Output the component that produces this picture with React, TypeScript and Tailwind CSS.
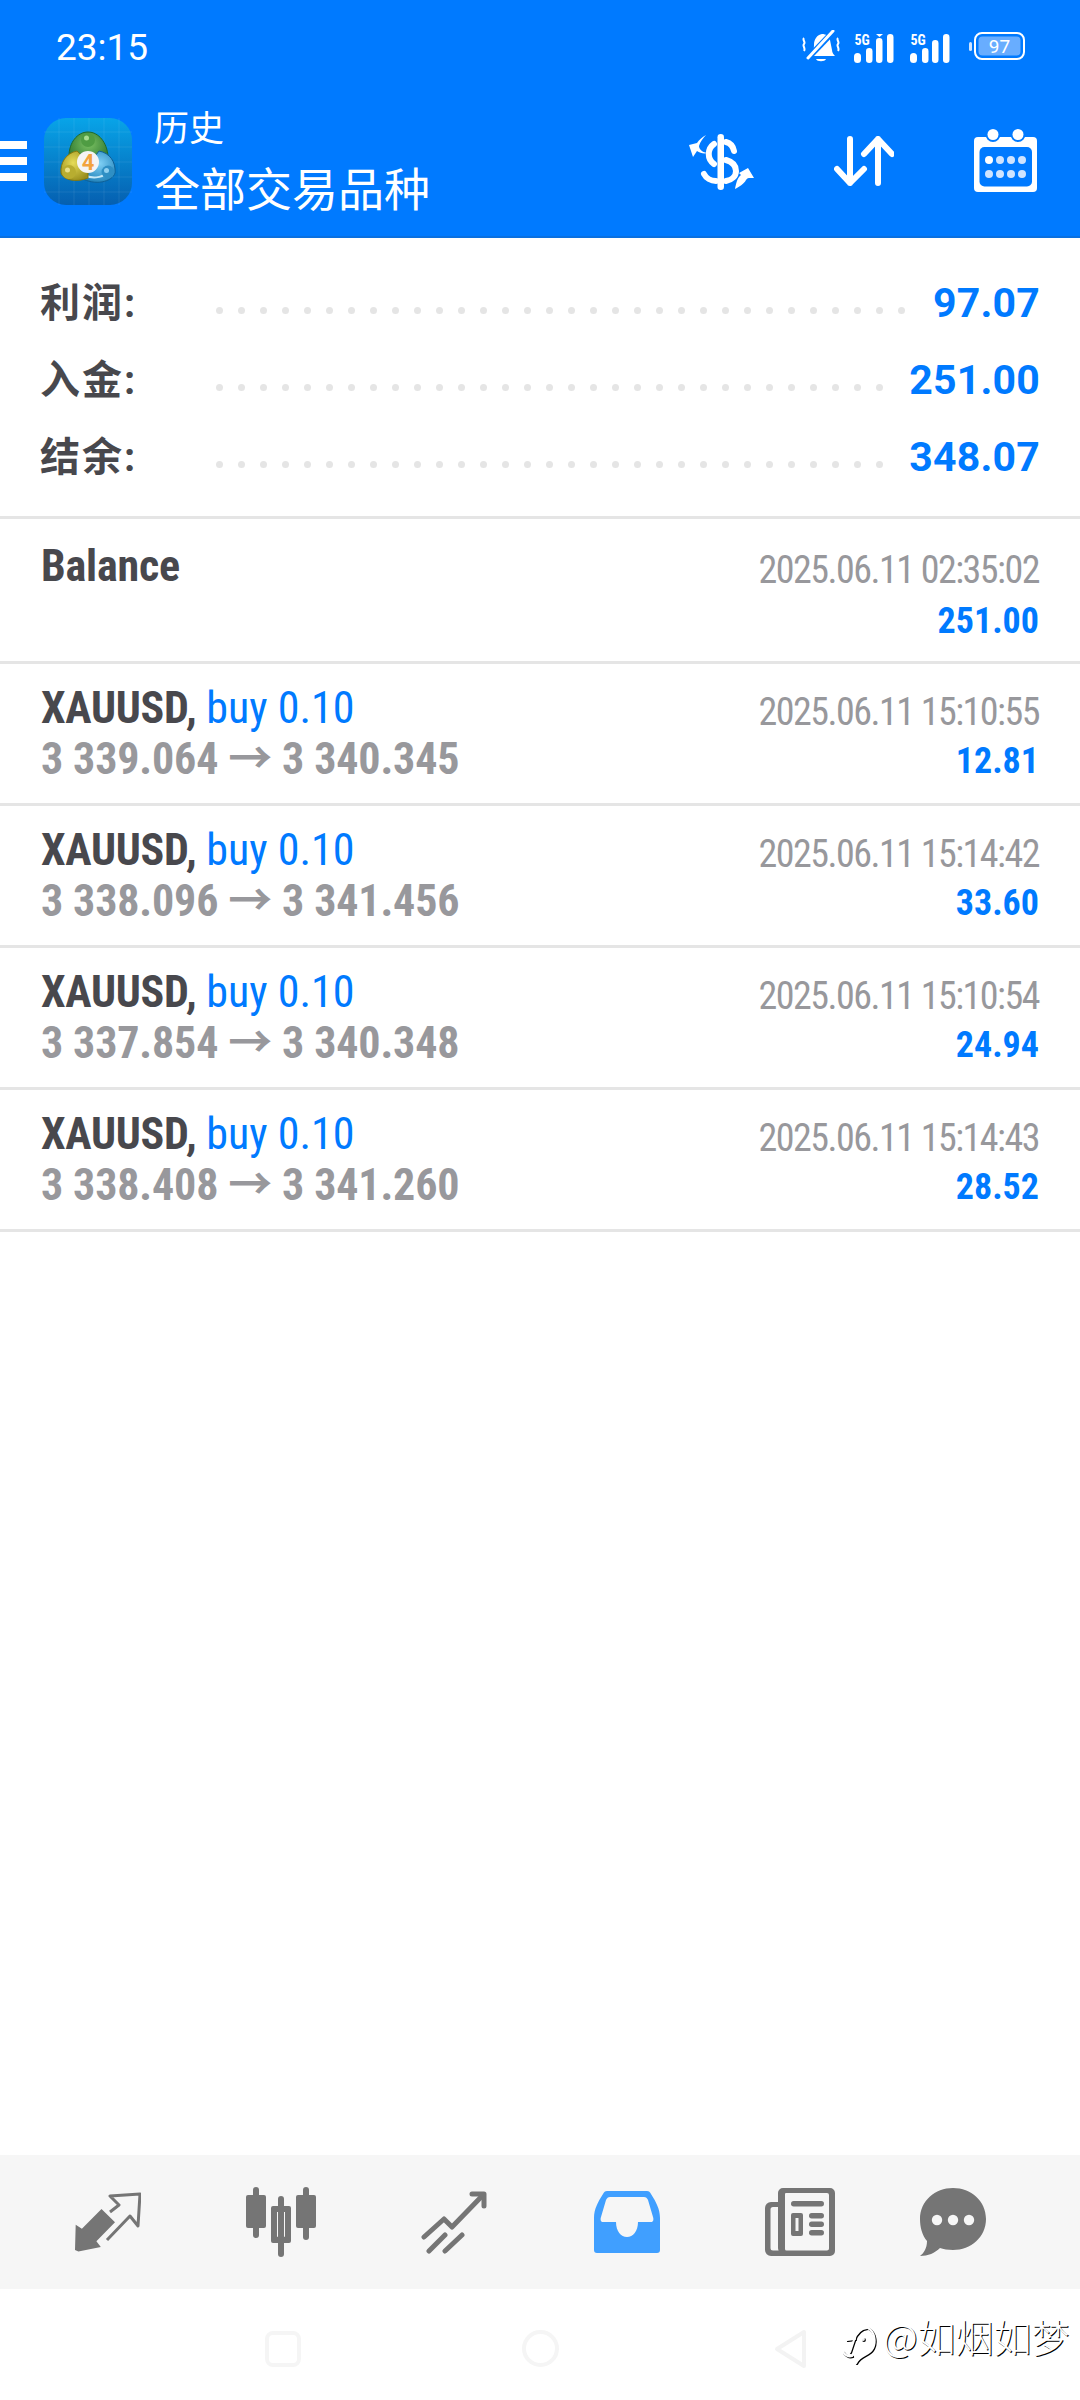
const CJK = "Roboto, 'Noto Sans CJK SC', sans-serif";

const summary = [
  { label: "利润:", value: "97.07", dots: 32 },
  { label: "入金:", value: "251.00", dots: 31 },
  { label: "结余:", value: "348.07", dots: 31 },
];

const deals = [
  { from: "3 339.064", to: "3 340.345", time: "2025.06.11 15:10:55", profit: "12.81" },
  { from: "3 338.096", to: "3 341.456", time: "2025.06.11 15:14:42", profit: "33.60" },
  { from: "3 337.854", to: "3 340.348", time: "2025.06.11 15:10:54", profit: "24.94" },
  { from: "3 338.408", to: "3 341.260", time: "2025.06.11 15:14:43", profit: "28.52" },
];

function Signal({ marker }: { marker?: boolean }) {
  return (
    <svg width="40" height="33" viewBox="0 -4 40 33" fill="#fff">
      <text x="0.5" y="10.5" fontSize="14" fontWeight="700" fontFamily="Roboto, sans-serif" className="[font-stretch:75%]">5G</text>
      <rect x="0" y="19" width="7" height="10" rx="3.500" />
      <rect x="12" y="14" width="6.500" height="15" rx="3.200" />
      <rect x="22" y={marker ? 4 : 6} width="6.500" height={marker ? 25 : 23} rx="3.200" />
      <rect x="33" y="0" width="6.500" height="29" rx="3.200" />
      {marker && <path d="M22 0h7l-3.500 3z" />}
    </svg>
  );
}

function Battery() {
  return (
    <svg width="56" height="28" viewBox="0 0 56 28">
      <rect x="0" y="10" width="3" height="9" rx="1.500" fill="#cfe4ff" />
      <rect x="6" y="1" width="49" height="26" rx="7" fill="none" stroke="#fff" strokeWidth="2" />
      <rect x="9.500" y="4.500" width="42" height="19" rx="4" fill="#68adff" />
      <text x="30.500" y="20.500" textAnchor="middle" fontSize="19" fill="#fff" fontFamily="Roboto, sans-serif">97</text>
    </svg>
  );
}

function MuteBell() {
  return (
    <svg width="38" height="33" viewBox="0 0 38 33" fill="none" stroke="#fff">
      <path d="M9 26c2-3 3-6 3-11 0-6 3-10 8-11 4 0 7 2 8 6l2 10c0 3 2 5 3 6z" fill="#fff" stroke="none" />
      <path d="M14 29h10c-1 3-9 3-10 0z" fill="#fff" stroke="none" />
      <path d="M6 28L31 2" stroke="#007aff" strokeWidth="6" />
      <path d="M6 28L31 1" strokeWidth="3" strokeLinecap="round" />
      <path d="M2 8c-2 2 2 4 0 6s2 4 0 7M36 8c-2 2 2 4 0 6s2 4 0 7" strokeWidth="2" />
    </svg>
  );
}

function DollarSwap() {
  return (
    <svg width="66" height="56" viewBox="0 0 66 56" fill="#fff">
      <g fill="none" stroke="#fff" strokeWidth="6" strokeLinecap="round">
        <path d="M26 10C19 15 19 25 26 30" />
        <path d="M38 8c4 1 7 4 8 9" />
        <path d="M38 26c7 2 10 6 10 11 0 5-4 9-10 10" />
        <path d="M16 40c2 4 7 7 12 7" />
      </g>
      <rect x="29.500" y="0" width="6.500" height="56" rx="3.200" />
      <path d="M18 1C14 3 11 6 9 9L1 11l4 12 4-6c3 2 7 3 10 2-5-1-8-4-8-7 1-4 4-8 7-11z" />
      <path d="M47 55c1-5 2-11 6-14l-2-2 9-5 6 10h-5c-2 0-2 1-3 2-2 4-7 7-11 9z" />
    </svg>
  );
}

function SortArrows() {
  return (
    <svg width="60" height="50" viewBox="0 0 60 50" fill="none" stroke="#fff" strokeWidth="6" strokeLinecap="round" strokeLinejoin="round">
      <path d="M16 3v44M3 33l13 14 14-14" />
      <path d="M44 47V3M30 18L44 3l14 15" />
    </svg>
  );
}

function Calendar() {
  return (
    <svg width="64" height="64" viewBox="0 0 64 64" fill="#fff">
      <rect x="0" y="8" width="63" height="55" rx="4" />
      <rect x="5.500" y="18" width="52.500" height="39.500" rx="5" fill="#007aff" />
      <circle cx="19" cy="5.500" r="7.500" fill="#007aff" />
      <circle cx="44" cy="5.500" r="7.500" fill="#007aff" />
      <circle cx="19" cy="5.500" r="5.500" />
      <circle cx="44" cy="5.500" r="5.500" />
      {[15, 26, 37, 48].map((x, i) => (
        <g key={x}>
          <circle cx={x} cy="31" r="4" fill={i === 0 ? "#fff" : "#cfe4ff"} />
          <circle cx={x} cy="45" r="4" fill="#cfe4ff" />
        </g>
      ))}
    </svg>
  );
}

function AppLogo() {
  return (
    <svg width="88" height="87" viewBox="0 0 88 87">
      <defs>
        <linearGradient id="tile" x1="0" y1="0" x2="0" y2="1">
          <stop offset="0" stopColor="#08a4e8" />
          <stop offset="1" stopColor="#055fb0" />
        </linearGradient>
        <radialGradient id="green" cx="0.5" cy="0.35" r="0.65">
          <stop offset="0" stopColor="#7cc263" />
          <stop offset="1" stopColor="#25702c" />
        </radialGradient>
        <radialGradient id="yellow" cx="0.45" cy="0.4" r="0.65">
          <stop offset="0" stopColor="#e6dc58" />
          <stop offset="1" stopColor="#9a8f1c" />
        </radialGradient>
        <radialGradient id="sky" cx="0.55" cy="0.4" r="0.65">
          <stop offset="0" stopColor="#7fd0f5" />
          <stop offset="1" stopColor="#1c7fb8" />
        </radialGradient>
      </defs>
      <rect width="88" height="87" rx="22" fill="url(#tile)" />
      <path d="M15 0v87M30 0v87M45 0v87M60 0v87M75 0v87M0 14h88M0 29h88M0 44h88M0 59h88M0 74h88" stroke="#fff" strokeOpacity="0.08" strokeWidth="1" />
      <path d="M44 14c11 0 19 11 20 24L44 48 25 38c0-13 8-24 19-24z" fill="url(#green)" stroke="#1f6a2a" strokeWidth="1" />
      <circle cx="44" cy="22" r="7" fill="#4f9c43" />
      <circle cx="42.500" cy="20" r="2.500" fill="#a8dc90" />
      <path d="M55 33c11 2 17 11 16 22-3 9-20 13-34 5l9-15z" fill="url(#sky)" stroke="#0f5f95" strokeWidth="1" />
      <path d="M40 57c8 4 17 3 23-2" fill="none" stroke="#c4e8f8" strokeWidth="2" />
      <circle cx="64" cy="54" r="6.500" fill="#2f8fc4" />
      <circle cx="62.500" cy="52.500" r="2.500" fill="#8fd0f0" />
      <path d="M33 33c-11 2-17 12-16 22 2 7 15 10 27 5L44 44z" fill="url(#yellow)" stroke="#85790f" strokeWidth="1" />
      <circle cx="25" cy="54" r="7" fill="#b8ad30" />
      <circle cx="23.500" cy="52" r="2.500" fill="#e8e08a" />
      <circle cx="44" cy="44" r="11" fill="#f4f4f4" />
      <text x="44" y="52" textAnchor="middle" fontSize="22" fontWeight="700" fill="#f2a33c" fontFamily="Roboto, sans-serif">4</text>
    </svg>
  );
}

function TradeIcon() {
  return (
    <svg width="66" height="60" viewBox="0 0 66 60" fill="#757575">
      <path d="M26.500 17L40 30.300 21.400 49.200 25.800 55 3.400 59.500 0 58 .7 32.700 6.900 36.800z" />
      <path d="M35 20l9-7-9-9 30-2-2 32-8-10-23 24" fill="none" stroke="#757575" strokeWidth="3" strokeLinejoin="round" />
    </svg>
  );
}

function CandlesIcon() {
  return (
    <svg width="70" height="70" viewBox="0 0 70 70" fill="#757575">
      <rect x="7" y="0" width="6" height="51" rx="3" />
      <rect x="0" y="8" width="20" height="33" rx="2" />
      <rect x="32" y="9" width="6" height="61" rx="3" />
      <path fillRule="evenodd" d="M27 19h16a2 2 0 012 2v33a2 2 0 01-2 2H27a2 2 0 01-2-2V21a2 2 0 012-2zm4 6v24a1 1 0 001 1h6a1 1 0 001-1V25z" />
      <rect x="57" y="0" width="6" height="53" rx="3" />
      <rect x="50" y="8" width="20" height="33" rx="2" />
    </svg>
  );
}

function ChartIcon() {
  return (
    <svg width="66" height="63" viewBox="0 0 66 63" fill="none" stroke="#757575" strokeWidth="5" strokeLinecap="round" strokeLinejoin="round">
      <path d="M3 46l20-18 8 8 31-32" />
      <path d="M51 3h12v12" />
      <path d="M8 60l16-16M24 60l17-16" />
    </svg>
  );
}

function InboxIcon() {
  return (
    <svg width="66" height="63" viewBox="0 0 66 63" fill="#409fff">
      <path fillRule="evenodd" d="M13 0h40c2 0 3 1 4 3 5 8 9 15 9 24v32c0 2-1 3-3 3H3c-2 0-3-1-3-3V27C0 18 4 11 9 3c1-2 2-3 4-3zm3 6c-2 0-3 1-4 3L7 26c-1 3 0 5 2 5h13c0 9 5 15 11 15s11-6 11-15h13c2 0 3-2 2-5L54 9c-1-2-2-3-4-3z" />
    </svg>
  );
}

function NewsIcon() {
  return (
    <svg width="70" height="68" viewBox="0 0 70 68" fill="#757575">
      <path fillRule="evenodd" d="M19 0h46a5 5 0 015 5v58a5 5 0 01-5 5H6a6 6 0 01-6-6V20a6 6 0 016-6h7V5a5 5 0 015-5zm1 6v55a1.500 1.500 0 001.500 1.500H62a2 2 0 002-2V7a2 2 0 00-2-2H21a1 1 0 00-1 1zM13 19H8a2.500 2.500 0 00-2.500 2.500V60a2.500 2.500 0 002.500 2.500h5.600A6 6 0 0113 60z" />
      <rect x="26" y="13" width="33" height="5.500" rx="2.700" />
      <path fillRule="evenodd" d="M28 25h8a2 2 0 012 2v19a2 2 0 01-2 2h-8a2 2 0 01-2-2V27a2 2 0 012-2zm2.500 5v13h3V30z" />
      <rect x="44" y="25" width="15" height="5.500" rx="2.700" />
      <rect x="44" y="33.500" width="15" height="5.500" rx="2.700" />
      <rect x="44" y="42" width="15" height="5.500" rx="2.700" />
    </svg>
  );
}

function ChatIcon() {
  return (
    <svg width="66" height="68" viewBox="0 0 66 68" fill="#757575">
      <path d="M33 0c18 0 33 13 33 31S51 62 33 62c-5 0-10-1-13-2-5 5-12 8-20 8 4-3 7-8 7-15C2 47 0 39 0 31 0 13 15 0 33 0z" />
      <circle cx="17" cy="32" r="5.200" fill="#f6f6f6" />
      <circle cx="33" cy="32" r="5.200" fill="#f6f6f6" />
      <circle cx="49" cy="32" r="5.200" fill="#f6f6f6" />
    </svg>
  );
}

function WatermarkLogo() {
  const lines = (color: string, dx: number, dy: number) => (
    <g fill="none" stroke={color} strokeWidth="2.200" strokeLinecap="round" transform={`translate(${dx} ${dy})`}>
      <path d="M24 2C16 3 13 8 11 14L7 26" />
      <path d="M4 14l8-1" />
      <path d="M25 2c7 4 8 14 5 20-4 8-13 6-17 15" />
      <path d="M0 26c3 4 6 5 9 4" />
      <circle cx="20" cy="13" r="0.800" />
    </g>
  );
  return (
    <svg width="36" height="39" viewBox="0 0 36 39">
      {lines("#000", 1, 1)}
      {lines("#fff", 0, 0)}
    </svg>
  );
}

export default function App() {
  return (
    <div className="flex h-[2400px] w-[1080px] flex-col bg-white" style={{ fontFamily: CJK }}>
      {/* Header */}
      <div className="h-[238px] shrink-0 border-b-[2px] border-[#0a70e0] bg-[#007aff] text-white">
        <div className="flex h-[96px] items-center pr-[55px] pl-[56px]">
          <span className="text-[37px]">23:15</span>
          <div className="mb-[4px] ml-auto flex items-center">
            <MuteBell />
            <div className="ml-[14px]"><Signal marker /></div>
            <div className="ml-[16px]"><Signal /></div>
            <div className="ml-[19px]"><Battery /></div>
          </div>
        </div>
        <div className="flex h-[130px] items-center pr-[42px]">
          <div className="flex w-[27px] flex-col gap-[8px]">
            <div className="h-[8px] bg-white" />
            <div className="h-[8px] bg-white" />
            <div className="h-[8px] bg-white" />
          </div>
          <div className="ml-[17px]"><AppLogo /></div>
          <div className="mt-[6px] ml-[22px] flex flex-col gap-[8px]">
            <span className="text-[35px] leading-[44px]">历史</span>
            <span className="text-[46px] leading-[60px]">全部交易品种</span>
          </div>
          <div className="mt-[2px] ml-auto"><DollarSwap /></div>
          <div className="ml-[80px]"><SortArrows /></div>
          <div className="ml-[80px]"><Calendar /></div>
        </div>
      </div>

      {/* Summary */}
      <div className="border-b-[3px] border-[#e5e5e5] pt-[27px] pb-[20px]">
        {summary.map((row) => (
          <div key={row.label} className="flex h-[77px] items-center pr-[40px] pl-[40px]">
            <span className="w-[176px] text-[40px] font-bold tracking-[2px] text-[#48484d]">{row.label}</span>
            <div className="mt-[14px] flex gap-[15px]">
              {Array.from({ length: row.dots }, (_, i) => (
                <div key={i} className="size-[7px] rounded-full bg-[#e5e5e5]" />
              ))}
            </div>
            <span className="ml-auto text-[41px] font-bold tracking-[0.2px] text-[#007aff]">{row.value}</span>
          </div>
        ))}
      </div>

      {/* Balance */}
      <div className="flex h-[145px] shrink-0 justify-between border-b-[3px] border-[#e5e5e5] pt-[22px] pr-[41px] pl-[41px]">
        <span className="text-[44px] leading-[51px] font-bold tracking-[-0.2px] text-[#48484d] [font-stretch:75%]">Balance</span>
        <div className="mt-[4px] flex flex-col items-end [font-stretch:75%]">
          <span className="text-[38px] leading-[51px] tracking-[-1.5px] text-[#98989c]">2025.06.11 02:35:02</span>
          <span className="text-[36px] leading-[51px] font-bold text-[#007aff]">251.00</span>
        </div>
      </div>

      {/* Deals */}
      {deals.map((d) => (
        <div key={d.time} className="flex h-[142px] shrink-0 justify-between border-b-[3px] border-[#e5e5e5] pt-[19px] pr-[41px] pl-[41px]">
          <div className="flex flex-col [font-stretch:75%]">
            <div className="text-[44px] leading-[51px]">
              <span className="font-bold tracking-[-0.3px] text-[#48484d]">XAUUSD, </span>
              <span className="text-[#007aff]">buy 0.10</span>
            </div>
            <div className="text-[44px] leading-[51px] font-bold tracking-[-0.15px] text-[#98989c]">
              {d.from} → {d.to}
            </div>
          </div>
          <div className="mt-[4px] flex flex-col items-end [font-stretch:75%]">
            <span className="text-[38px] leading-[51px] tracking-[-1.5px] text-[#98989c]">{d.time}</span>
            <span className="text-[36px] leading-[46px] font-bold text-[#007aff]">{d.profit}</span>
          </div>
        </div>
      ))}

      <div className="flex-1" />

      {/* Bottom tabs */}
      <div className="flex h-[134px] shrink-0 items-center bg-[#f6f6f6] pl-[21px]">
        <div className="flex w-[173px] justify-center"><TradeIcon /></div>
        <div className="flex w-[173px] justify-center"><CandlesIcon /></div>
        <div className="flex w-[173px] justify-center"><ChartIcon /></div>
        <div className="flex w-[173px] justify-center"><InboxIcon /></div>
        <div className="flex w-[173px] justify-center"><NewsIcon /></div>
        <div className="-ml-[20px] flex w-[173px] justify-center"><ChatIcon /></div>
      </div>

      {/* System nav with watermark */}
      <div className="relative flex h-[111px] shrink-0 items-center bg-white pt-[8px] pl-[265px]">
        <div className="size-[36px] rounded-[8px] border-[4px] border-[#f5f5f5]" />
        <div className="ml-[221px] size-[37px] rounded-full border-[4px] border-[#f5f5f5]" />
        <svg className="ml-[215px]" width="34" height="40" viewBox="0 0 34 40" fill="none" stroke="#f3f3f3" strokeWidth="4" strokeLinejoin="round">
          <path d="M30 3v34L3 20z" />
        </svg>
        <div className="absolute top-[28px] left-[843px] flex items-start">
          <div className="mt-[9px]"><WatermarkLogo /></div>
          <span className="ml-[4px] text-[38px] leading-none font-light text-white [text-shadow:1px_1px_0_#000]" style={{ fontFamily: "'Noto Sans CJK SC', sans-serif" }}>@如烟如梦</span>
        </div>
      </div>
    </div>
  );
}
